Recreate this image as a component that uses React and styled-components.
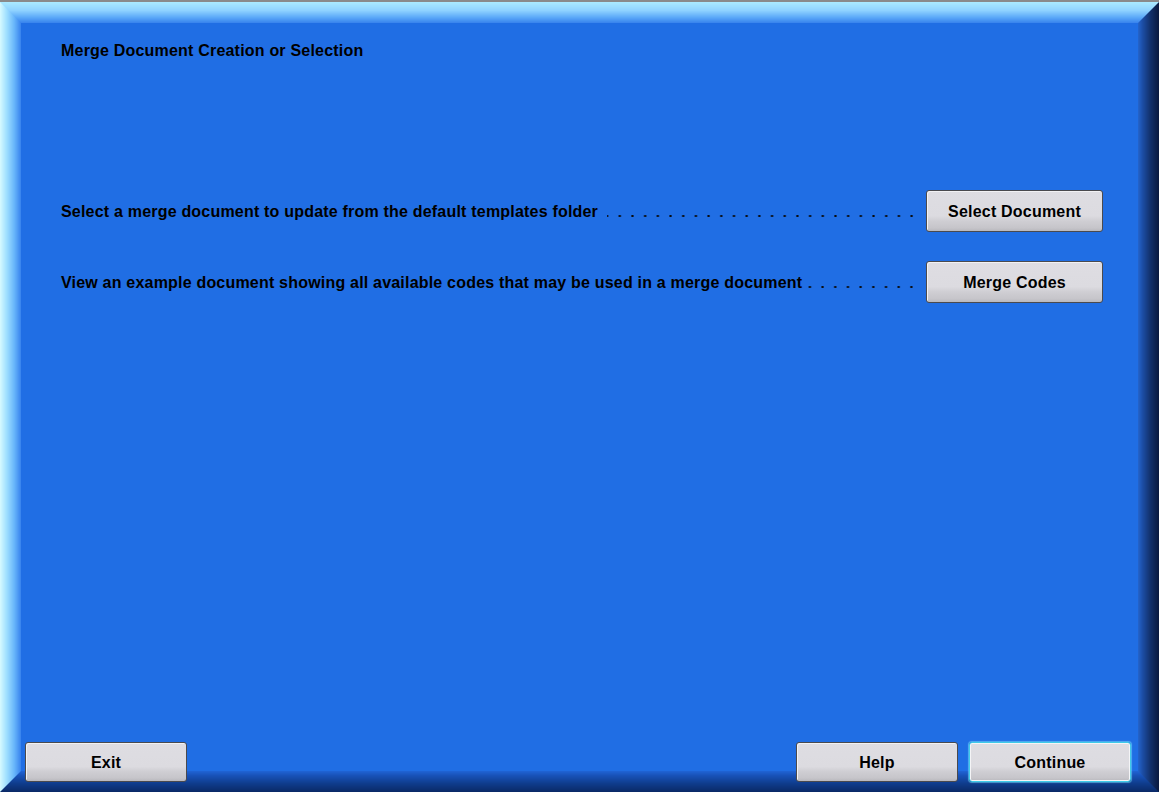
import React from "react";
import styled, { createGlobalStyle } from "styled-components";

const GlobalStyle = createGlobalStyle`
  html, body {
    margin: 0;
    padding: 0;
    overflow: hidden;
  }
  body {
    font-family: "Liberation Sans", Arial, sans-serif;
  }
`;

/* ---- bevelled window frame ---- */

const RINGS = 21;

const STOPS = {
  top: [
    [0, "#a9e9ff"],
    [0.4, "#8fd2ff"],
    [0.75, "#5aa8f8"],
    [1, "#3b86ee"],
  ],
  left: [
    [0, "#d2f8ff"],
    [0.3, "#a0e0ff"],
    [0.7, "#66b4fa"],
    [1, "#3b86ee"],
  ],
  right: [
    [0, "#0a1a40"],
    [0.4, "#12306a"],
    [0.8, "#1c4ea6"],
    [1, "#2362c8"],
  ],
  bottom: [
    [0, "#0a2a68"],
    [0.4, "#0f3c8c"],
    [0.8, "#1852b8"],
    [1, "#1f62d2"],
  ],
};

const hexToRgb = (h) => [
  parseInt(h.slice(1, 3), 16),
  parseInt(h.slice(3, 5), 16),
  parseInt(h.slice(5, 7), 16),
];

function sample(stops, t) {
  for (let i = 0; i < stops.length - 1; i++) {
    const [t0, c0] = stops[i];
    const [t1, c1] = stops[i + 1];
    if (t <= t1) {
      const k = (t - t0) / (t1 - t0);
      const a = hexToRgb(c0);
      const b = hexToRgb(c1);
      const m = a.map((v, j) => Math.round(v + (b[j] - v) * k));
      return `rgb(${m[0]}, ${m[1]}, ${m[2]})`;
    }
  }
  return stops[stops.length - 1][1];
}

const Frame = styled.div`
  display: flex;
  width: 100vw;
  height: 100vh;
  box-sizing: border-box;
  border-top: 2px solid #8a8a8a;
  background: #206ee4;
`;

const Ring = styled.div`
  flex: 1;
  display: flex;
  min-width: 0;
  min-height: 0;
  border: 1px solid;
  border-color: ${(p) => p.$top} ${(p) => p.$right} ${(p) => p.$bottom}
    ${(p) => p.$left};
`;

function Bevel({ depth = 0, children }) {
  if (depth === RINGS) return children;
  const t = depth / (RINGS - 1);
  return (
    <Ring
      $top={sample(STOPS.top, t)}
      $left={sample(STOPS.left, t)}
      $right={sample(STOPS.right, t)}
      $bottom={sample(STOPS.bottom, t)}
    >
      <Bevel depth={depth + 1}>{children}</Bevel>
    </Ring>
  );
}

/* ---- panel content ---- */

const Panel = styled.div`
  flex: 1;
  display: flex;
  flex-direction: column;
  min-width: 0;
`;

const Content = styled.div`
  flex: 1;
  padding: 18px 35px 0 40px;
`;

const Label = styled.div`
  padding-top: 2px;
  font-size: 16px;
  letter-spacing: 0.2px;
  font-weight: bold;
  line-height: 16px;
  color: #000;
  white-space: nowrap;
`;

const Options = styled.div`
  margin-top: 131px;
  display: flex;
  flex-direction: column;
  gap: 29px;
`;

const OptionRow = styled.div`
  display: flex;
  align-items: center;
`;

const Leader = styled.div`
  flex: 1;
  height: 16px;
  margin: 0 8px 0 ${(p) => p.$gap}px;
  background-image: radial-gradient(
    circle at center,
    #0a0a0a 0,
    #0a0a0a 0.9px,
    transparent 1.4px
  );
  background-size: 12.7px 4px;
  background-repeat: repeat-x;
  background-position: right 0 bottom 1px;
`;

const Button = styled.button`
  box-sizing: border-box;
  width: ${(p) => p.$w}px;
  height: ${(p) => p.$h}px;
  padding: 2px 0 0;
  font-family: "Liberation Sans", Arial, sans-serif;
  font-size: 16px;
  letter-spacing: 0.2px;
  font-weight: bold;
  color: #000;
  border-radius: 3px;
  border: 1px solid ${(p) => (p.$focused ? "#3fcbe8" : "#4a4a4e")};
  box-shadow: ${(p) =>
    p.$focused
      ? "0 0 1px 1px rgba(120, 232, 255, 0.55), inset 0 0 0 1px #f4f4f6"
      : "inset 1px 1px 0 #f2f2f4"};
  background: linear-gradient(
    to bottom,
    #dedde2 0%,
    #dcdbe0 62%,
    #cfced3 75%,
    #c6c5ca 92%,
    #b9b8bd 100%
  );
  cursor: pointer;
`;

const Footer = styled.div`
  display: flex;
  justify-content: space-between;
  align-items: flex-end;
  padding: 0 7px 0 4px;
  margin-bottom: -11px;
`;

const ButtonGroup = styled.div`
  display: flex;
  gap: 11px;
`;

export default function App() {
  return (
    <>
      <GlobalStyle />
      <Frame>
        <Bevel>
          <Panel>
            <Content>
              <Label>Merge Document Creation or Selection</Label>
              <Options>
                <OptionRow>
                  <Label>
                    Select a merge document to update from the default
                    templates folder
                  </Label>
                  <Leader $gap={9} />
                  <Button $w={177} $h={42}>
                    Select Document
                  </Button>
                </OptionRow>
                <OptionRow>
                  <Label>
                    View an example document showing all available codes that
                    may be used in a merge document
                  </Label>
                  <Leader $gap={6} />
                  <Button $w={177} $h={42}>
                    Merge Codes
                  </Button>
                </OptionRow>
              </Options>
            </Content>
            <Footer>
              <Button $w={162} $h={40}>
                Exit
              </Button>
              <ButtonGroup>
                <Button $w={162} $h={40}>
                  Help
                </Button>
                <Button $w={162} $h={40} $focused>
                  Continue
                </Button>
              </ButtonGroup>
            </Footer>
          </Panel>
        </Bevel>
      </Frame>
    </>
  );
}
